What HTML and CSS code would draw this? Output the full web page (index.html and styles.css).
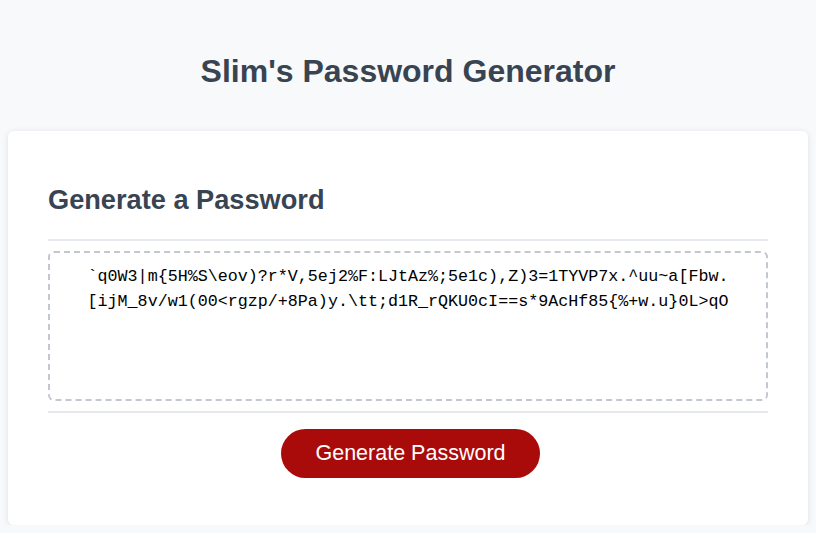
FILE: index.html
```html
<!DOCTYPE html>
<html lang="en">
<head>
<meta charset="utf-8">
<title>Slim's Password Generator</title>
<link rel="stylesheet" href="styles.css">
</head>
<body>
<header class="page-header">
  <h1 class="page-title">Slim's Password Generator</h1>
</header>
<main class="card">
  <h2 class="card-title">Generate a Password</h2>
  <div class="card-body">
    <textarea class="password-box" readonly aria-label="Generated Password">`q0W3|m{5H%S\eov)?r*V,5ej2%F:LJtAz%;5e1c),Z)3=1TYVP7x.^uu~a[Fbw.[ijM_8v/w1(00&lt;rgzp/+8Pa)y.\tt;d1R_rQKU0cI==s*9AcHf85{%+w.u}0L&gt;qO</textarea>
  </div>
  <div class="card-footer">
    <button class="btn-generate" type="button">Generate Password</button>
  </div>
</main>
</body>
</html>
```
FILE: styles.css
```css
* { box-sizing: border-box; }
html, body { margin: 0; padding: 0; }
body {
  background: #f7f9fb;
  font-family: "Liberation Sans", Arial, sans-serif;
  color: #394452;
}
.page-header {
  padding: 55px 0 44px;
  text-align: center;
}
.page-title {
  margin: 0;
  font-size: 32px;
  line-height: 32px;
  font-weight: 700;
  color: #394452;
}
.card {
  margin: 0 8px;
  background: #ffffff;
  border-radius: 6px;
  box-shadow: 0 1px 6px rgba(20, 30, 50, 0.10);
  padding: 55px 40px 47px;
}
.card-title {
  margin: 0;
  font-size: 27.2px;
  line-height: 27px;
  font-weight: 700;
  color: #394452;
}
.card-body {
  margin-top: 26px;
  border-top: 2px solid #e6e8eb;
  border-bottom: 2px solid #e6e8eb;
  padding: 10px 0;
}
.password-box {
  display: block;
  width: 100%;
  height: 150px;
  resize: none;
  border: 2px dashed #c3c7cf;
  border-radius: 6px;
  padding: 11px 36px;
  font-family: "Liberation Mono", "DejaVu Sans Mono", monospace;
  font-size: 16.7px;
  line-height: 25px;
  color: #000000;
  text-align: center;
  background: #ffffff;
  overflow: hidden;
  outline: none;
  word-break: break-all;
}
.card-footer {
  display: flex;
  justify-content: center;
  padding: 16px 0 0 5px;
}
.btn-generate {
  width: 259px;
  height: 49px;
  border: none;
  border-radius: 25px;
  background: #a90b0b;
  color: #ffffff;
  font-family: "Liberation Sans", Arial, sans-serif;
  font-size: 21.5px;
  cursor: pointer;
}
```
